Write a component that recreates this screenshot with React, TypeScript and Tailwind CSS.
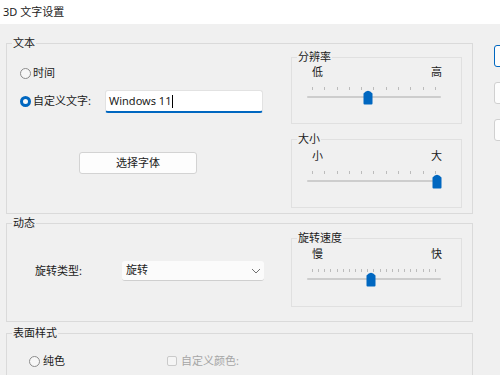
import React from "react"

const font = "font-['Noto_Sans','Noto_Sans_CJK_SC',sans-serif]"

function Thumb({ center }: { center: number }) {
  return (
    <svg
      className="absolute top-[-7px]"
      style={{ left: center - 5 }}
      width="10"
      height="16"
      viewBox="0 0 10 16"
    >
      <path d="M0.5 4.5 Q5 -1 9.5 4.5 V14.5 Q9.5 15.5 8.5 15.5 H1.5 Q0.5 15.5 0.5 14.5 Z" fill="#0067c0" />
    </svg>
  )
}

type SliderProps = {
  title: string
  low: string
  high: string
  count: number
  center: number
  heightClass: string
  padClass: string
  className?: string
}

function SliderBox({ title, low, high, count, center, heightClass, padClass, className = "" }: SliderProps) {
  return (
    <div className={`relative w-[171px] border border-[#e0e0e0] ${heightClass} ${className}`}>
      <span className="absolute left-[5px] top-[-8px] bg-[#f0f0f0] px-[1px] leading-[14px]">{title}</span>
      <div className={`flex justify-between pl-[20px] pr-[19px] leading-[14px] ${padClass}`}>
        <span>{low}</span>
        <span>{high}</span>
      </div>
      <div className="ml-[15px] mt-[8px] flex w-[134px] justify-between px-[5px]">
        {Array.from({ length: count }, (_, i) => (
          <span key={i} className="h-[3px] w-px bg-[#bcbcbc]" />
        ))}
      </div>
      <div className="relative ml-[15px] mt-[6px] h-[2px] w-[134px] rounded-full bg-[#cdcdcd]">
        <Thumb center={center - 308} />
      </div>
    </div>
  )
}

function Group({ title, className, children }: { title: string; className: string; children: React.ReactNode }) {
  return (
    <div className={`relative border border-[#dadada] ${className}`}>
      <span className="absolute left-[5px] top-[-8px] bg-[#f0f0f0] px-[1px] leading-[14px]">{title}</span>
      {children}
    </div>
  )
}

function Radio({ checked }: { checked?: boolean }) {
  return checked ? (
    <span className="h-[11px] w-[11px] shrink-0 rounded-full border-[3px] border-[#0067c0] bg-[#f7f7f7]" />
  ) : (
    <span className="h-[11px] w-[11px] shrink-0 rounded-full border border-[#8c8c8c] bg-[#f7f7f7]" />
  )
}

export default function App() {
  return (
    <div className={`h-[375px] w-[500px] overflow-hidden bg-[#f0f0f0] text-[11px] text-[#1b1b1b] ${font}`}>
      <div className="flex h-[24px] items-center bg-white pl-[3px]">3D 文字设置</div>

      <div className="flex gap-[21px] pl-[6px] pt-[19px]">
        <div className="flex w-[467px] shrink-0 flex-col">
          {/* 文本 */}
          <Group title="文本" className="flex h-[171px]">
            <div className="flex flex-1 flex-col pl-[13px] pt-[22px]">
              <div className="flex h-[14px] items-center gap-[2px]">
                <Radio />
                <span>时间</span>
              </div>
              <div className="mt-[10px] flex h-[23px] items-center">
                <Radio checked />
                <span className="ml-[2px] w-[72px]">自定义文字:</span>
                <div className="flex h-[23px] w-[158px] items-center rounded-[3px] border border-[#e2e2e2] border-b-2 border-b-[#0067c0] bg-white pl-[3px]">
                  <span className="font-['Noto_Sans',sans-serif]">Windows 11</span>
                  <span className="ml-[1px] h-[13px] w-px bg-black" />
                </div>
              </div>
              <button className="ml-[59px] mt-[39px] flex h-[22px] w-[118px] items-center justify-center rounded-[3px] border border-[#d3d3d3] bg-[#fdfdfd]">
                选择字体
              </button>
            </div>
            <div className="mr-[10px] flex flex-col pt-[13px]">
              <SliderBox title="分辨率" low="低" high="高" count={11} center={369} heightClass="h-[67px]" padClass="pt-[7px]" />
              <SliderBox title="大小" low="小" high="大" count={11} center={438} heightClass="h-[69px]" padClass="pt-[9px]" className="mt-[15px]" />
            </div>
          </Group>

          {/* 动态 */}
          <Group title="动态" className="mt-[9px] flex h-[99px]">
            <div className="flex flex-1 items-start pl-[28px] pt-[37px]">
              <span className="flex h-[20px] w-[87px] items-center">旋转类型:</span>
              <div className="flex h-[20px] w-[142px] items-center justify-between rounded-[3px] border-b border-b-[#cfcfcf] bg-[#fbfbfb] pl-[4px] pr-[3px]">
                <span>旋转</span>
                <svg width="10" height="6" viewBox="0 0 10 6">
                  <path d="M1 1 L5 5 L9 1" fill="none" stroke="#707070" strokeWidth="1" />
                </svg>
              </div>
            </div>
            <div className="mr-[10px] pt-[14px]">
              <SliderBox title="旋转速度" low="慢" high="快" count={21} center={372} heightClass="h-[69px]" padClass="pt-[8px]" />
            </div>
          </Group>

          {/* 表面样式 */}
          <Group title="表面样式" className="mt-[11px] h-[60px]">
            <div className="mt-[20px] flex h-[14px] items-center pl-[22px]">
              <div className="flex w-[138px] items-center gap-[3px]">
                <Radio />
                <span>纯色</span>
              </div>
              <div className="flex items-center gap-[4px] text-[#a6a6a6]">
                <span className="h-[10px] w-[10px] rounded-[2px] border border-[#cacaca] bg-[#f5f5f5]" />
                <span>自定义颜色:</span>
              </div>
            </div>
          </Group>
        </div>

        <div className="mt-[2px] flex shrink-0 flex-col gap-[15px]">
          <button className="h-[22px] w-[80px] rounded-[3px] border border-[#0067c0] bg-[#fdfdfd]" />
          <button className="h-[22px] w-[80px] rounded-[3px] border border-[#d0d0d0] bg-[#fdfdfd]" />
          <button className="h-[22px] w-[80px] rounded-[3px] border border-[#d0d0d0] bg-[#fdfdfd]" />
        </div>
      </div>
    </div>
  )
}
